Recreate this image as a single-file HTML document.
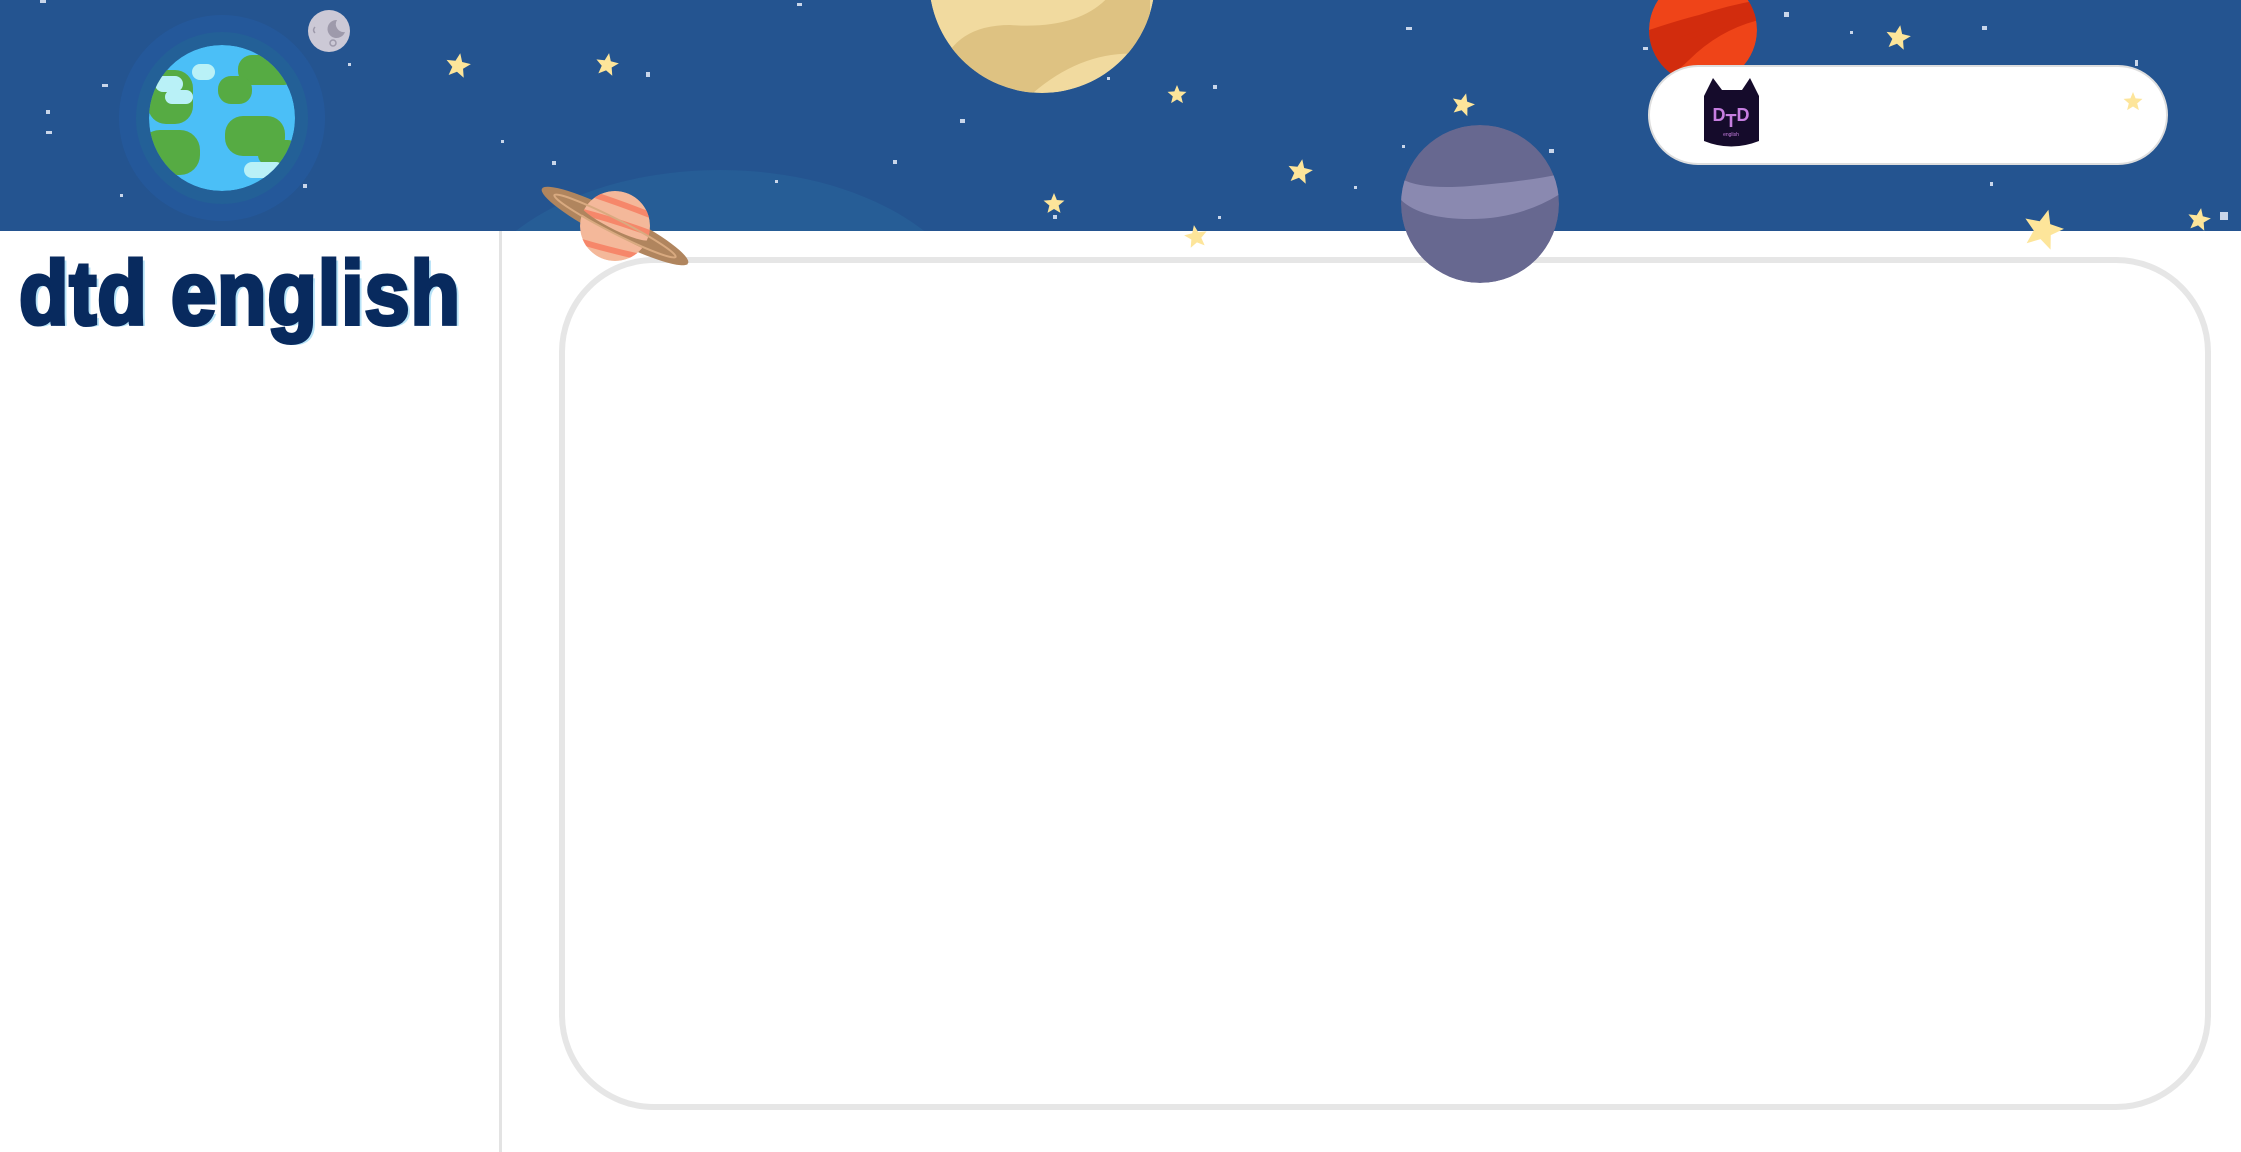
<!DOCTYPE html>
<html><head><meta charset="utf-8"><style>
html,body{margin:0;padding:0;width:2241px;height:1152px;overflow:hidden;background:#fff;font-family:"Liberation Sans",sans-serif}
.hdr{position:absolute;left:0;top:0;width:2241px;height:231px;background:#245490}
.div{position:absolute;left:499px;top:231px;width:3px;height:921px;background:#e3e3e3}
.box{position:absolute;left:559px;top:257px;width:1640px;height:841px;border:6px solid #e6e6e6;border-radius:95px;background:#fff}
.title{position:absolute;left:19px;top:243px;font-size:90px;font-weight:bold;color:#082a5e;-webkit-text-stroke:4px #082a5e;transform:scaleX(0.9);transform-origin:0 0;white-space:nowrap;text-shadow:4px 2px 0 #b5e2f7;letter-spacing:1px}
.pill{position:absolute;left:1648px;top:65px;width:516px;height:96px;border:2px solid #dedede;border-radius:50px;background:#fff}
svg{position:absolute;left:0;top:0}
</style></head><body>
<div class="hdr"></div>
<div class="div"></div>
<div class="box"></div>
<div class="title">dtd english</div>
<svg width="2241" height="300" viewBox="0 0 2241 300">
<defs>
<polygon id="st" points="0,-10 2.6,-3.6 9.5,-3.1 4.2,1.4 5.9,8.1 0,4.5 -5.9,8.1 -4.2,1.4 -9.5,-3.1 -2.6,-3.6" fill="#fde59a"/>
<clipPath id="ce"><circle cx="222" cy="118" r="73"/></clipPath>
<clipPath id="cv"><circle cx="1042" cy="-20" r="113"/></clipPath>
<clipPath id="cm"><circle cx="1703" cy="30" r="54"/></clipPath>
<clipPath id="cp"><circle cx="1480" cy="204" r="79"/></clipPath>
<clipPath id="cs"><circle cx="615" cy="226" r="35"/></clipPath>
<clipPath id="hc"><rect x="0" y="0" width="2241" height="231"/></clipPath>
</defs>
<ellipse cx="720" cy="330" rx="260" ry="160" fill="#265d96" clip-path="url(#hc)"/>
<g fill="#c9d6ea">
<rect x="40" y="0" width="6" height="3"/><rect x="102" y="84" width="6" height="3"/><rect x="46" y="110" width="4" height="4"/><rect x="46" y="131" width="6" height="3"/>
<rect x="348" y="63" width="3" height="3"/><rect x="303" y="184" width="4" height="4"/><rect x="120" y="194" width="3" height="3"/>
<rect x="646" y="72" width="4" height="5"/><rect x="552" y="161" width="4" height="4"/><rect x="501" y="140" width="3" height="3"/><rect x="775" y="180" width="3" height="3"/>
<rect x="797" y="3" width="5" height="3"/><rect x="893" y="160" width="4" height="4"/><rect x="960" y="119" width="5" height="4"/><rect x="1053" y="215" width="4" height="4"/>
<rect x="1107" y="77" width="3" height="3"/><rect x="1213" y="85" width="4" height="4"/><rect x="1218" y="216" width="3" height="3"/><rect x="1354" y="186" width="3" height="3"/>
<rect x="1402" y="145" width="3" height="3"/><rect x="1406" y="27" width="6" height="3"/><rect x="1549" y="149" width="5" height="4"/>
<rect x="1643" y="47" width="5" height="3"/><rect x="1784" y="12" width="5" height="5"/><rect x="1850" y="31" width="3" height="3"/><rect x="1982" y="26" width="5" height="4"/>
<rect x="1990" y="182" width="3" height="4"/><rect x="2135" y="60" width="3" height="6"/><rect x="2220" y="212" width="8" height="8"/>
</g>
<circle cx="222" cy="118" r="103" fill="#24589a"/>
<circle cx="222" cy="118" r="86" fill="#236097"/>
<g clip-path="url(#ce)">
<circle cx="222" cy="118" r="73" fill="#4bbff7"/>
<rect x="148" y="70" width="45" height="54" rx="18" fill="#56ab43"/>
<rect x="140" y="130" width="60" height="45" rx="20" fill="#56ab43"/>
<rect x="238" y="55" width="60" height="30" rx="14" fill="#56ab43"/>
<rect x="218" y="76" width="34" height="28" rx="13" fill="#56ab43"/>
<rect x="225" y="116" width="60" height="40" rx="18" fill="#56ab43"/>
<rect x="258" y="140" width="40" height="25" rx="10" fill="#56ab43"/>
<rect x="192" y="64" width="23" height="16" rx="8" fill="#b9f1f7"/>
<rect x="155" y="76" width="28" height="16" rx="8" fill="#b9f1f7"/>
<rect x="165" y="90" width="28" height="14" rx="7" fill="#b9f1f7"/>
<rect x="244" y="162" width="40" height="16" rx="8" fill="#b9f1f7"/>
</g>
<circle cx="329" cy="31" r="21" fill="#ccc9d6"/>
<path d="M337 20 a9 9 0 1 0 8 12 a8 8 0 0 1 -8 -12z" fill="#9e9aab"/>
<circle cx="333" cy="43" r="3" fill="none" stroke="#9e9aab" stroke-width="1.5"/>
<path d="M315 27 q-3 3 0 6" stroke="#9e9aab" stroke-width="1.5" fill="none"/>
<g clip-path="url(#cv)">
<circle cx="1042" cy="-20" r="113" fill="#f1da9f"/>
<path d="M940 70 q15 -45 70 -45 q70 5 100 -30 l40 0 l0 60 q-70 -10 -130 50 l-80 0z" fill="#dec282"/>
</g>
<g clip-path="url(#cm)">
<circle cx="1703" cy="30" r="54" fill="#ef4418"/>
<path d="M1649 30 q30 -10 50 -15 q30 -10 60 -15 l0 20 q-40 10 -70 40 q-20 20 -40 20z" fill="#d22c0d"/>
<path d="M1680 40 q40 -15 80 -25" stroke="#d22c0d" stroke-width="5" fill="none"/>
</g>
<g transform="rotate(27 615 226)">
<ellipse cx="615" cy="226" rx="82" ry="14" fill="#b0855e"/>
</g>
<g clip-path="url(#cs)">
<circle cx="615" cy="226" r="35" fill="#f4b89a"/>
<g stroke="#f6876a" stroke-width="6" fill="none">
<path d="M575 210 q40 10 80 25"/><path d="M575 240 q40 12 80 20"/><path d="M595 195 q30 10 55 20"/>
</g>
</g>
<path d="M577 211 a82 14 27 0 0 111 54 L650 240 a40 8 27 0 1 -70 -34z" fill="#b0855e"/>
<g transform="rotate(27 615 226)"><ellipse cx="615" cy="226" rx="68" ry="7" fill="none" stroke="#d9aa80" stroke-width="2"/></g>
<g clip-path="url(#cp)">
<circle cx="1480" cy="204" r="79" fill="#676890"/>
<path d="M1400 178 q20 12 70 8 q60 -5 90 -12 l0 20 q-40 25 -90 25 q-50 0 -70 -20z" fill="#8a89b0"/>
</g>
<use href="#st" transform="translate(458,66) rotate(10) scale(1.3)"/>
<use href="#st" transform="translate(607,65) rotate(10) scale(1.2)"/>
<use href="#st" transform="translate(1177,95) scale(1.0)"/>
<use href="#st" transform="translate(1463,105) rotate(15) scale(1.2)"/>
<use href="#st" transform="translate(1300,172) rotate(10) scale(1.3)"/>
<use href="#st" transform="translate(1054,204) scale(1.1)"/>
<use href="#st" transform="translate(1196,237) rotate(-10) scale(1.2)"/>
<use href="#st" transform="translate(1898,38) rotate(10) scale(1.3)"/>
<use href="#st" transform="translate(2043,230) rotate(15) scale(2.1)"/>
<use href="#st" transform="translate(2199,220) rotate(10) scale(1.2)"/>
</svg>
<div class="pill"></div>
<svg width="2241" height="300" viewBox="0 0 2241 300">
<use href="#st" transform="translate(2133,102) scale(1.0)"/>
<path d="M1704 96 L1713 78 L1722 90 L1742 90 L1750 78 L1759 96 L1759 141 Q1731 152 1704 141 Z" fill="#150b2b"/>
<text x="1731" y="121" text-anchor="middle" font-family="Liberation Sans" font-weight="bold" font-size="18" fill="#c77ee0">D<tspan dy="6">T</tspan><tspan dy="-6">D</tspan></text>
<text x="1731" y="136" text-anchor="middle" font-family="Liberation Sans" font-size="5" fill="#c77ee0">english</text>
</svg>
</body></html>
